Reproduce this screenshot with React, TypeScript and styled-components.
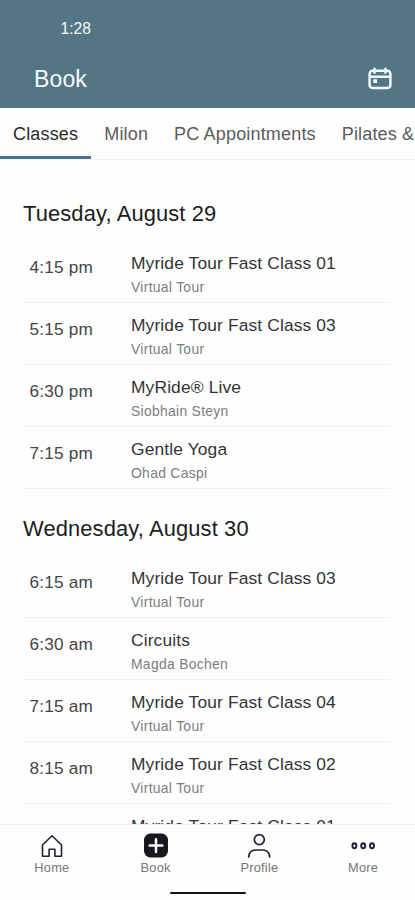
import React from "react";
import styled, { createGlobalStyle } from "styled-components";

const GlobalStyle = createGlobalStyle`
  * { box-sizing: border-box; }
  body { margin: 0; background: #fff; font-family: "Liberation Sans", Arial, sans-serif; }
`;

const Screen = styled.div`
  display: flex;
  flex-direction: column;
  width: 415px;
  height: 900px;
  overflow: hidden;
  background: #fefefe;
  white-space: nowrap;
`;

const Header = styled.header`
  flex: none;
  height: 108px;
  background: #547684;
  color: #f3fbff;
`;

const StatusBar = styled.div`
  height: 56px;
  padding-left: 60.5px;
  font-size: 15.6px;
  line-height: 58px;
`;

const TitleBar = styled.div`
  display: flex;
  align-items: center;
  justify-content: space-between;
  height: 46px;
  padding: 0 22px 0 34px;
`;

const Title = styled.h1`
  margin: 0;
  font-size: 23px;
  font-weight: 400;
  letter-spacing: 0.15px;
  line-height: 46px;
`;

const Tabs = styled.nav`
  flex: none;
  display: flex;
  height: 52px;
  border-bottom: 1px solid #f0f1f3;
  overflow: hidden;
`;

const Tab = styled.div<{ $active?: boolean }>`
  flex: none;
  height: 51px;
  padding: 0 13px;
  border-bottom: 3px solid ${(p) => (p.$active ? "#467385" : "transparent")};
  color: ${(p) => (p.$active ? "#2b2b2d" : "#5b5b5d")};
  font-size: 18px;
  letter-spacing: 0.17px;
  line-height: 52px;
`;

const Schedule = styled.main`
  flex: 1;
  min-height: 0;
  padding: 35px 24px 0 23px;
  overflow: hidden;
`;

const Day = styled.section`
  margin-bottom: 21px;
`;

const DayTitle = styled.h2`
  height: 38px;
  margin: 0 0 8px;
  color: #1c1c1e;
  font-size: 21.9px;
  font-weight: 400;
  letter-spacing: 0.13px;
  line-height: 38px;
`;

const Row = styled.div`
  display: flex;
  height: 62px;
  border-bottom: 1px solid #f1f1f2;
`;

const Time = styled.div`
  width: 108px;
  padding: 16px 0 0 6.5px;
  color: #454547;
  font-size: 17.2px;
  letter-spacing: 0.22px;
  line-height: 20px;
`;

const ClassName = styled.div`
  padding-top: 12px;
  color: #343436;
  font-size: 17.4px;
  letter-spacing: 0.13px;
  line-height: 20px;
`;

const Instructor = styled.div`
  padding-top: 5px;
  color: #7d7d80;
  font-size: 13.9px;
  letter-spacing: 0.3px;
  line-height: 18px;
`;

const BottomBar = styled.footer`
  flex: none;
  height: 76px;
  border-top: 1px solid #f0f1f2;
  background: #fefefe;
`;

const NavItems = styled.div`
  display: flex;
  height: 66px;
`;

const NavItem = styled.div`
  flex: 1;
  display: flex;
  flex-direction: column;
  align-items: center;
  padding-top: 8px;
  color: #777779;
  font-size: 12.8px;
  letter-spacing: 0.22px;
  line-height: 16px;

  svg { display: block; margin-bottom: 1px; }
`;

const HomeIndicator = styled.div`
  width: 76px;
  height: 2px;
  margin: 1px auto 0;
  border-radius: 1px;
  background: #151518;
`;

const CalendarIcon = () => (
  <svg width="26" height="26" viewBox="0 0 26 26" fill="none" stroke="#eef9ff" strokeWidth="2.5" strokeLinecap="round">
    <rect x="2.6" y="4.7" width="20.8" height="17.3" rx="3" />
    <path d="M3 10.7h20M7.5 2.8v4M18.5 2.8v4" />
    <rect x="6.3" y="13.2" width="3.8" height="3.8" rx=".6" fill="#eef9ff" stroke="none" />
  </svg>
);

const HomeIcon = () => (
  <svg width="26" height="26" viewBox="0 0 26 26" fill="none" stroke="#232335" strokeWidth="1.6" strokeLinejoin="round">
    <path d="M13 2.7 3.5 12v11.3h6.6v-7h5.8v7h6.6V12Z" />
  </svg>
);

const BookIcon = () => (
  <svg width="26" height="26" viewBox="0 0 26 26" fill="none">
    <rect x="1" y="0.5" width="24" height="24" rx="6.5" fill="#17181c" />
    <path d="M13 6.3v12.6M6.7 12.6h12.6" stroke="#fff" strokeWidth="2.5" strokeLinecap="round" />
  </svg>
);

const ProfileIcon = () => (
  <svg width="26" height="26" viewBox="0 0 26 26" fill="none" stroke="#22222e" strokeWidth="1.7" strokeLinecap="round">
    <circle cx="13.3" cy="6.6" r="5" />
    <path d="M2.7 24c.4-4.4 2.8-7 6.8-7h7.4c4 0 6.4 2.6 6.8 7" />
  </svg>
);

const MoreIcon = () => (
  <svg width="26" height="26" viewBox="0 0 26 26" fill="none" stroke="#1d1e33" strokeWidth="1.9">
    <ellipse cx="4.4" cy="12.8" rx="2" ry="2.5" />
    <ellipse cx="13.2" cy="12.8" rx="2" ry="2.5" />
    <ellipse cx="22" cy="12.8" rx="2" ry="2.5" />
  </svg>
);

const tabs = ["Classes", "Milon", "PC Appointments", "Pilates &"];

const days = [
  {
    title: "Tuesday, August 29",
    classes: [
      ["4:15 pm", "Myride Tour Fast Class 01", "Virtual Tour"],
      ["5:15 pm", "Myride Tour Fast Class 03", "Virtual Tour"],
      ["6:30 pm", "MyRide® Live", "Siobhain Steyn"],
      ["7:15 pm", "Gentle Yoga", "Ohad Caspi"],
    ],
  },
  {
    title: "Wednesday, August 30",
    classes: [
      ["6:15 am", "Myride Tour Fast Class 03", "Virtual Tour"],
      ["6:30 am", "Circuits", "Magda Bochen"],
      ["7:15 am", "Myride Tour Fast Class 04", "Virtual Tour"],
      ["8:15 am", "Myride Tour Fast Class 02", "Virtual Tour"],
      ["9:15 am", "Myride Tour Fast Class 01", "Virtual Tour"],
    ],
  },
];

const navigation = [
  { label: "Home", Icon: HomeIcon },
  { label: "Book", Icon: BookIcon },
  { label: "Profile", Icon: ProfileIcon },
  { label: "More", Icon: MoreIcon },
];

export default function App() {
  return (
    <>
      <GlobalStyle />
      <Screen>
        <Header>
          <StatusBar>1:28</StatusBar>
          <TitleBar>
            <Title>Book</Title>
            <CalendarIcon />
          </TitleBar>
        </Header>
        <Tabs>
          {tabs.map((label, i) => (
            <Tab key={label} $active={i === 0}>{label}</Tab>
          ))}
        </Tabs>
        <Schedule>
          {days.map((day) => (
            <Day key={day.title}>
              <DayTitle>{day.title}</DayTitle>
              {day.classes.map(([time, name, instructor]) => (
                <Row key={time}>
                  <Time>{time}</Time>
                  <div>
                    <ClassName>{name}</ClassName>
                    <Instructor>{instructor}</Instructor>
                  </div>
                </Row>
              ))}
            </Day>
          ))}
        </Schedule>
        <BottomBar>
          <NavItems>
            {navigation.map(({ label, Icon }) => (
              <NavItem key={label}>
                <Icon />
                {label}
              </NavItem>
            ))}
          </NavItems>
          <HomeIndicator />
        </BottomBar>
      </Screen>
    </>
  );
}
